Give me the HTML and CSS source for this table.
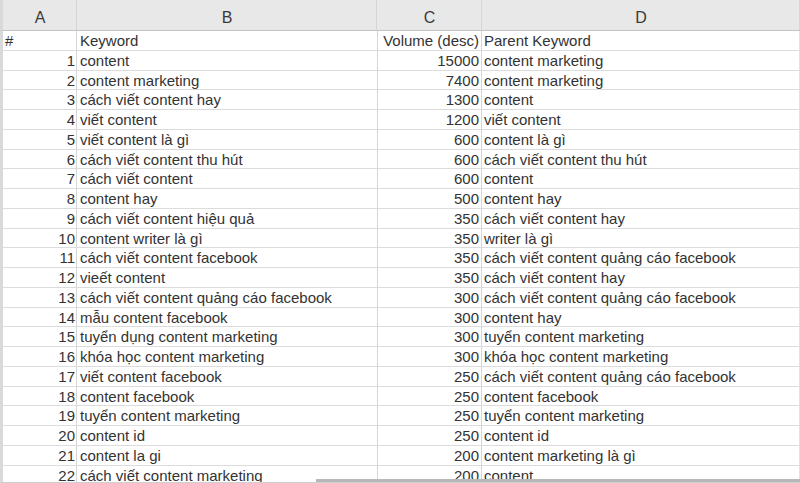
FILE: index.html
```html
<!DOCTYPE html>
<html lang="vi">
<head>
<meta charset="utf-8">
<title>Keywords</title>
<link rel="stylesheet" href="styles.css">
</head>
<body>
<div class="sheet">
  <div class="grid">
    <div class="hd first">A</div><div class="hd">B</div><div class="hd">C</div><div class="hd">D</div>

    <div class="c a l">#</div><div class="c">Keyword</div><div class="c n">Volume (desc)</div><div class="c d">Parent Keyword</div>
    <div class="c a">1</div><div class="c">content</div><div class="c n">15000</div><div class="c d">content marketing</div>
    <div class="c a">2</div><div class="c">content marketing</div><div class="c n">7400</div><div class="c d">content marketing</div>
    <div class="c a">3</div><div class="c">cách viết content hay</div><div class="c n">1300</div><div class="c d">content</div>
    <div class="c a">4</div><div class="c">viết content</div><div class="c n">1200</div><div class="c d">viết content</div>
    <div class="c a">5</div><div class="c">viết content là gì</div><div class="c n">600</div><div class="c d">content là gì</div>
    <div class="c a">6</div><div class="c">cách viết content thu hút</div><div class="c n">600</div><div class="c d">cách viết content thu hút</div>
    <div class="c a">7</div><div class="c">cách viết content</div><div class="c n">600</div><div class="c d">content</div>
    <div class="c a">8</div><div class="c">content hay</div><div class="c n">500</div><div class="c d">content hay</div>
    <div class="c a">9</div><div class="c">cách viết content hiệu quả</div><div class="c n">350</div><div class="c d">cách viết content hay</div>
    <div class="c a">10</div><div class="c">content writer là gì</div><div class="c n">350</div><div class="c d">writer là gì</div>
    <div class="c a">11</div><div class="c">cách viết content facebook</div><div class="c n">350</div><div class="c d">cách viết content quảng cáo facebook</div>
    <div class="c a">12</div><div class="c">vieết content</div><div class="c n">350</div><div class="c d">cách viết content hay</div>
    <div class="c a">13</div><div class="c">cách viết content quảng cáo facebook</div><div class="c n">300</div><div class="c d">cách viết content quảng cáo facebook</div>
    <div class="c a">14</div><div class="c">mẫu content facebook</div><div class="c n">300</div><div class="c d">content hay</div>
    <div class="c a">15</div><div class="c">tuyển dụng content marketing</div><div class="c n">300</div><div class="c d">tuyển content marketing</div>
    <div class="c a">16</div><div class="c">khóa học content marketing</div><div class="c n">300</div><div class="c d">khóa học content marketing</div>
    <div class="c a">17</div><div class="c">viết content facebook</div><div class="c n">250</div><div class="c d">cách viết content quảng cáo facebook</div>
    <div class="c a">18</div><div class="c">content facebook</div><div class="c n">250</div><div class="c d">content facebook</div>
    <div class="c a">19</div><div class="c">tuyển content marketing</div><div class="c n">250</div><div class="c d">tuyển content marketing</div>
    <div class="c a">20</div><div class="c">content id</div><div class="c n">250</div><div class="c d">content id</div>
    <div class="c a">21</div><div class="c">content la gi</div><div class="c n">200</div><div class="c d">content marketing là gì</div>
    <div class="c a">22</div><div class="c">cách viết content marketing</div><div class="c n">200</div><div class="c d">content</div>
  </div>
  <div class="hscroll"></div>
</div>
</body>
</html>
```

FILE: styles.css
```css
html, body {
  margin: 0;
  padding: 0;
  background: #ffffff;
  overflow: hidden;
}

.sheet {
  position: relative;
  width: 800px;
  height: 483px;
  overflow: hidden;
  font-family: "Liberation Sans", Arial, sans-serif;
  color: #333333;
  border-bottom: 1px solid #cfcfcf;
  box-sizing: border-box;
}

.grid {
  display: grid;
  grid-template-columns: 77px 300px 105px 318px;
  grid-template-rows: 31px;
  grid-auto-rows: 19.75px;
}

.hd {
  background: #e8e8e8;
  border-bottom: 1px solid #c4c4c4;
  box-shadow: inset -1px 0 0 #d6d6d6;
  display: flex;
  align-items: center;
  justify-content: center;
  padding-top: 6px;
  box-sizing: border-box;
  font-size: 16px;
  color: #3a3a3a;
}

.hd.first {
  border-left: 3px solid #d9d9d9;
}

.c {
  font-size: 15px;
  line-height: 19px;
  padding: 0 2px 0 3px;
  white-space: nowrap;
  overflow: visible;
  border-bottom: 1px solid #dcdcdc;
  box-sizing: border-box;
  height: 19.75px;
}

.c.a {
  text-align: right;
  border-left: 3px solid #d9d9d9;
  border-right: 1px solid #d6d6d6;
  padding-right: 1px;
}

.c.a.l {
  text-align: left;
  padding-left: 2px;
}

.c.n {
  text-align: right;
  border-left: 1px solid #d6d6d6;
  border-right: 1px solid #d6d6d6;
  padding-right: 2px;
}

.c.d {
  padding-left: 2px;
  border-right: 1px solid #e2e2e2;
}

.hscroll {
  position: absolute;
  left: 316px;
  right: 0;
  bottom: 0;
  height: 3px;
  background: #b8b8b8;
}
```
